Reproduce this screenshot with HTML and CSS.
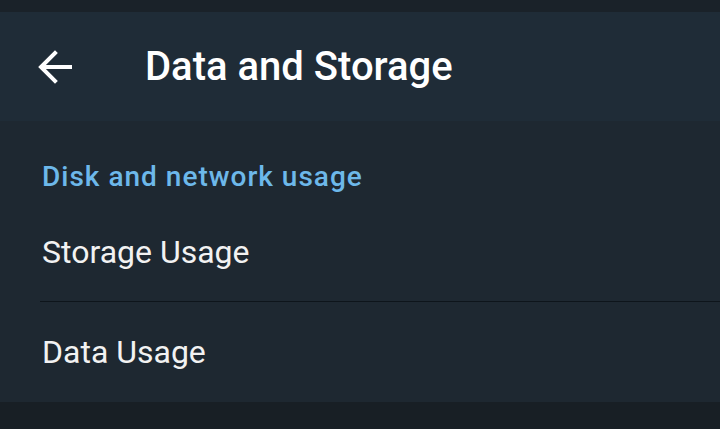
FILE: index.html
```html
<!DOCTYPE html>
<html>
<head>
<meta charset="utf-8">
<link rel="stylesheet" href="styles.css">
</head>
<body>
<div class="status"></div>
<header class="toolbar">
  <button class="back" aria-label="Back">
    <svg width="34" height="34" viewBox="0 0 34 34"><path d="M33 17H4M17 3L3 17l14 14" fill="none" stroke="#fff" stroke-width="4" stroke-linecap="square"/></svg>
  </button>
  <h1 class="title">Data and Storage</h1>
</header>
<main class="section">
  <div class="section-title">Disk and network usage</div>
  <div class="row row-divided">Storage Usage</div>
  <div class="row row-last">Data Usage</div>
</main>
<div class="footer"></div>
</body>
</html>
```
FILE: styles.css
```css
html, body {
  margin: 0;
  padding: 0;
  background: #181f25;
  font-family: Roboto, "Noto Sans", sans-serif;
  width: 720px;
  height: 429px;
  overflow: hidden;
}
.status {
  height: 12px;
  background: #1a2229;
}
.toolbar {
  height: 109px;
  background: #1f2c37;
  display: flex;
  align-items: center;
}
.back {
  background: none;
  border: 0;
  padding: 0;
  margin-left: 38px;
  width: 34px;
  height: 34px;
  display: flex;
}
.title {
  margin: 0 0 0 73px;
  color: #fff;
  font-size: 40px;
  font-weight: 500;
}
.section {
  background: #1e2831;
  height: 281px;
  padding-left: 40px;
  display: flex;
  flex-direction: column;
}
.section-title {
  color: #6db8ea;
  font-size: 28px;
  font-weight: 500;
  letter-spacing: 1px;
  padding: 38px 0 0 2px;
  line-height: 36px;
}
.row {
  color: #f2f2f2;
  font-size: 32px;
  padding-left: 2px;
  line-height: 40px;
}
.row-divided {
  padding-top: 37px;
  padding-bottom: 29px;
  border-bottom: 1px solid #0e151b;
}
.row-last {
  padding-top: 30px;
}
```
